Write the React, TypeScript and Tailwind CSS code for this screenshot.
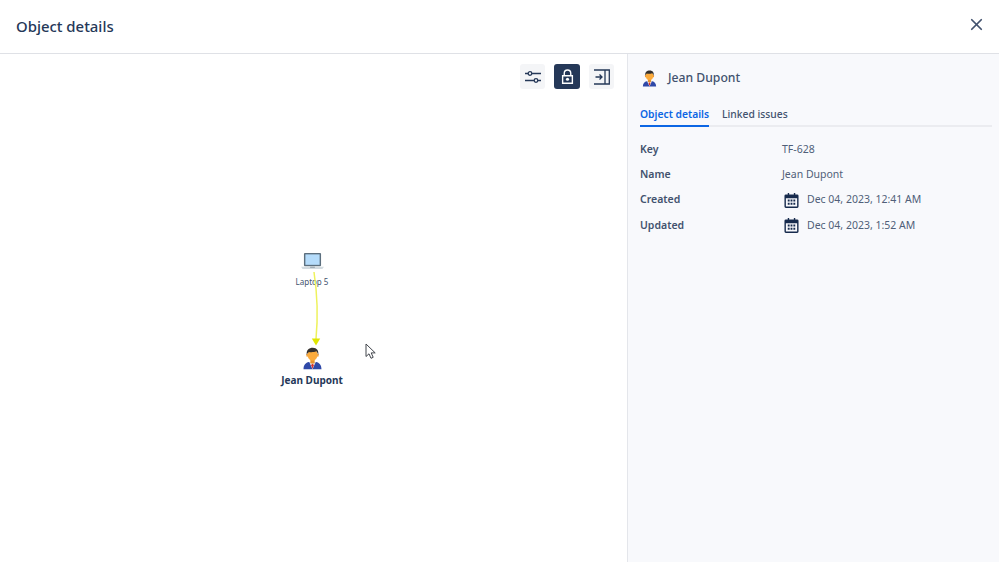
import { X } from "lucide-react";

function PersonIcon({ className }: { className?: string }) {
  return (
    <svg viewBox="0 0 32 32" className={className}>
      {/* suit */}
      <path d="M3.500 31c0-6 3-9 7.500-10l5 2 5-2c4.500 1 7.500 4 7.500 10z" fill="#2f49a8" />
      <path d="M11.500 21 16 31l4.500-10-4.500 2z" fill="#f3f4f6" />
      <path d="M15 23.500h2l.7 2-1.700 5-1.700-5z" fill="#d8342c" />
      {/* neck and face */}
      <rect x="13" y="16" width="6" height="7" fill="#e8932c" />
      <ellipse cx="16" cy="11" rx="7" ry="8" fill="#fbab3c" />
      <rect x="7.500" y="9.500" width="2" height="4" rx="1" fill="#f09a2f" />
      <rect x="22.500" y="9.500" width="2" height="4" rx="1" fill="#f09a2f" />
      {/* hair */}
      <path d="M8 11C7 4 11 1 16.500 1S25 5 24 11c-.7-2.500-1.500-4-3-5-3 1.500-8 1.500-10 .8C9.500 8 8.600 9 8 11z" fill="#33302e" />
    </svg>
  );
}

function LaptopIcon({ className }: { className?: string }) {
  return (
    <svg viewBox="0 0 24 20" className={className}>
      <rect x="3" y="1" width="18" height="14" rx="1" fill="#5c6f7e" />
      <rect x="4.500" y="2.500" width="15" height="11" fill="#b5dcfb" />
      <path d="M0 15.500h24l-1.500 2.500h-21z" fill="#d3dbe0" />
      <rect x="9.500" y="15.500" width="5" height="1" fill="#8c9aa5" />
    </svg>
  );
}

function CalendarIcon() {
  return (
    <svg viewBox="0 0 16 16" className="w-[15px] h-[15px] shrink-0">
      <path
        fillRule="evenodd"
        d="M4 0h1.500v1.500h5V0H12v1.500h2A1.500 1.500 0 0 1 15.500 3v11.500A1.500 1.500 0 0 1 14 16H2A1.500 1.500 0 0 1 .5 14.500V3A1.500 1.500 0 0 1 2 1.500h2zM2 5.500v9h12v-9z"
        fill="#172b4d"
      />
      <path d="M4 7h2v2H4zM7 7h2v2H7zM10 7h2v2h-2zM4 10.500h2v2H4zM7 10.500h2v2H7zM10 10.500h2v2h-2z" fill="#172b4d" />
    </svg>
  );
}

function SlidersIcon() {
  return (
    <svg viewBox="0 0 16 16" className="w-[16px] h-[16px]" fill="none" stroke="#253858" strokeWidth="1.300">
      <path d="M0 4.500h3M7 4.500h9M0 11.500h9M13 11.500h3" />
      <circle cx="5" cy="4.500" r="1.800" />
      <circle cx="11" cy="11.500" r="1.800" />
    </svg>
  );
}

function LockIcon() {
  return (
    <svg viewBox="0 0 14 16" className="w-[13px] h-[15px]">
      <path d="M3.500 7V4.500a3.500 3.500 0 0 1 7 0V7" fill="none" stroke="#fff" strokeWidth="1.500" />
      <path fillRule="evenodd" d="M1 6.500h12V16H1zM2.500 8v6.500h9V8z" fill="#fff" />
      <circle cx="7" cy="11" r="1.700" fill="#fff" />
    </svg>
  );
}

function CollapseIcon() {
  return (
    <svg viewBox="0 0 16 16" className="w-[16px] h-[16px]" fill="none" stroke="#253858" strokeWidth="1.300">
      <path d="M0 1h15.300v14H0M11 1v14M1.500 8h6M5.500 5.500 8 8l-2.500 2.500" />
    </svg>
  );
}

const rows = [
  { label: "Key", value: "TF-628" },
  { label: "Name", value: "Jean Dupont" },
  { label: "Created", value: "Dec 04, 2023, 12:41 AM", date: true },
  { label: "Updated", value: "Dec 04, 2023, 1:52 AM", date: true },
];

export default function App() {
  return (
    <div className="w-[999px] h-[562px] flex flex-col bg-white overflow-hidden font-['Noto_Sans',sans-serif] text-[#42526e]">
      <header className="h-[54px] shrink-0 flex items-center justify-between pl-[16px] pr-[13px] border-b border-[#dfe1e6]">
        <h1 className="text-[14.900px] font-medium text-[#253858] -mt-[1px]">Object details</h1>
        <button className="text-[#42526e] -mt-[5px]">
          <X className="w-[19px] h-[19px]" strokeWidth={2.200} />
        </button>
      </header>

      <div className="flex flex-1 min-h-0">
        {/* graph canvas */}
        <div className="w-[627px] relative">
          <div className="flex justify-end gap-[9px] pt-[10px] pr-[13px]">
            <button className="w-[25px] h-[25px] flex items-center justify-center rounded-[3px] bg-[#f4f5f7]">
              <SlidersIcon />
            </button>
            <button className="w-[26px] h-[25px] flex items-center justify-center rounded-[3px] bg-[#253858]">
              <LockIcon />
            </button>
            <button className="w-[25px] h-[25px] flex items-center justify-center rounded-[3px] bg-[#f4f5f7]">
              <CollapseIcon />
            </button>
          </div>

          <div className="absolute left-[252px] top-[198px] w-[120px] flex flex-col items-center">
            <LaptopIcon className="w-[23px] h-[19px]" />
            <span className="text-[8px] leading-[12px] mt-[5px] text-[#42526e]">Laptop 5</span>
          </div>

          <svg className="absolute left-[306px] top-[214px]" width="20" height="80" viewBox="0 0 20 80" fill="none">
            <path d="M8 4C11 24 12 50 10 71" stroke="#eef25c" strokeWidth="1.500" />
            <path d="M5.800 70.500h8.400L10 77.500z" fill="#dfe600" />
          </svg>

          <div className="absolute left-[252px] top-[293px] w-[120px] flex flex-col items-center">
            <PersonIcon className="w-[23px] h-[23px]" />
            <span className="text-[10px] leading-[14px] mt-[2.500px] font-bold text-[#253858]">Jean Dupont</span>
          </div>

          {/* pointer caught in the capture */}
          <svg className="absolute left-[365px] top-[289px]" width="12" height="17" viewBox="0 0 12 17">
            <path d="M1 1v12.500l3-2.700 2 4.500 2.200-1-2-4.400h4z" fill="#fff" stroke="#42464d" strokeWidth="1" />
          </svg>
        </div>

        {/* detail panel */}
        <aside className="flex-1 bg-[#f8f9fc] border-l border-[#e4e6eb] pl-[12px] pr-[7px]">
          <div className="flex items-center pl-[1px] h-[49px]">
            <PersonIcon className="w-[17px] h-[17px]" />
            <span className="ml-[10px] text-[12.200px] font-medium text-[#42526e]">Jean Dupont</span>
          </div>

          <div className="flex gap-[13px] border-b-2 border-[#ebecf0] h-[24px]">
            <span className="h-[24px] border-b-2 border-[#0c66e4] text-[10.300px] leading-[22px] font-semibold text-[#0c66e4]">
              Object details
            </span>
            <span className="text-[10.300px] leading-[22px] font-medium text-[#42526e]">Linked issues</span>
          </div>

          <div className="mt-[10px] flex flex-col">
            {rows.map((row) => (
              <div key={row.label} className="h-[25.300px] flex items-center text-[10.500px]">
                <span className="w-[142px] font-semibold text-[#42526e]">{row.label}</span>
                {row.date ? (
                  <span className="flex items-center gap-[8px] text-[#505f79] pl-[2px]">
                    <CalendarIcon />
                    {row.value}
                  </span>
                ) : (
                  <span className="text-[#505f79]">{row.value}</span>
                )}
              </div>
            ))}
          </div>
        </aside>
      </div>
    </div>
  );
}
